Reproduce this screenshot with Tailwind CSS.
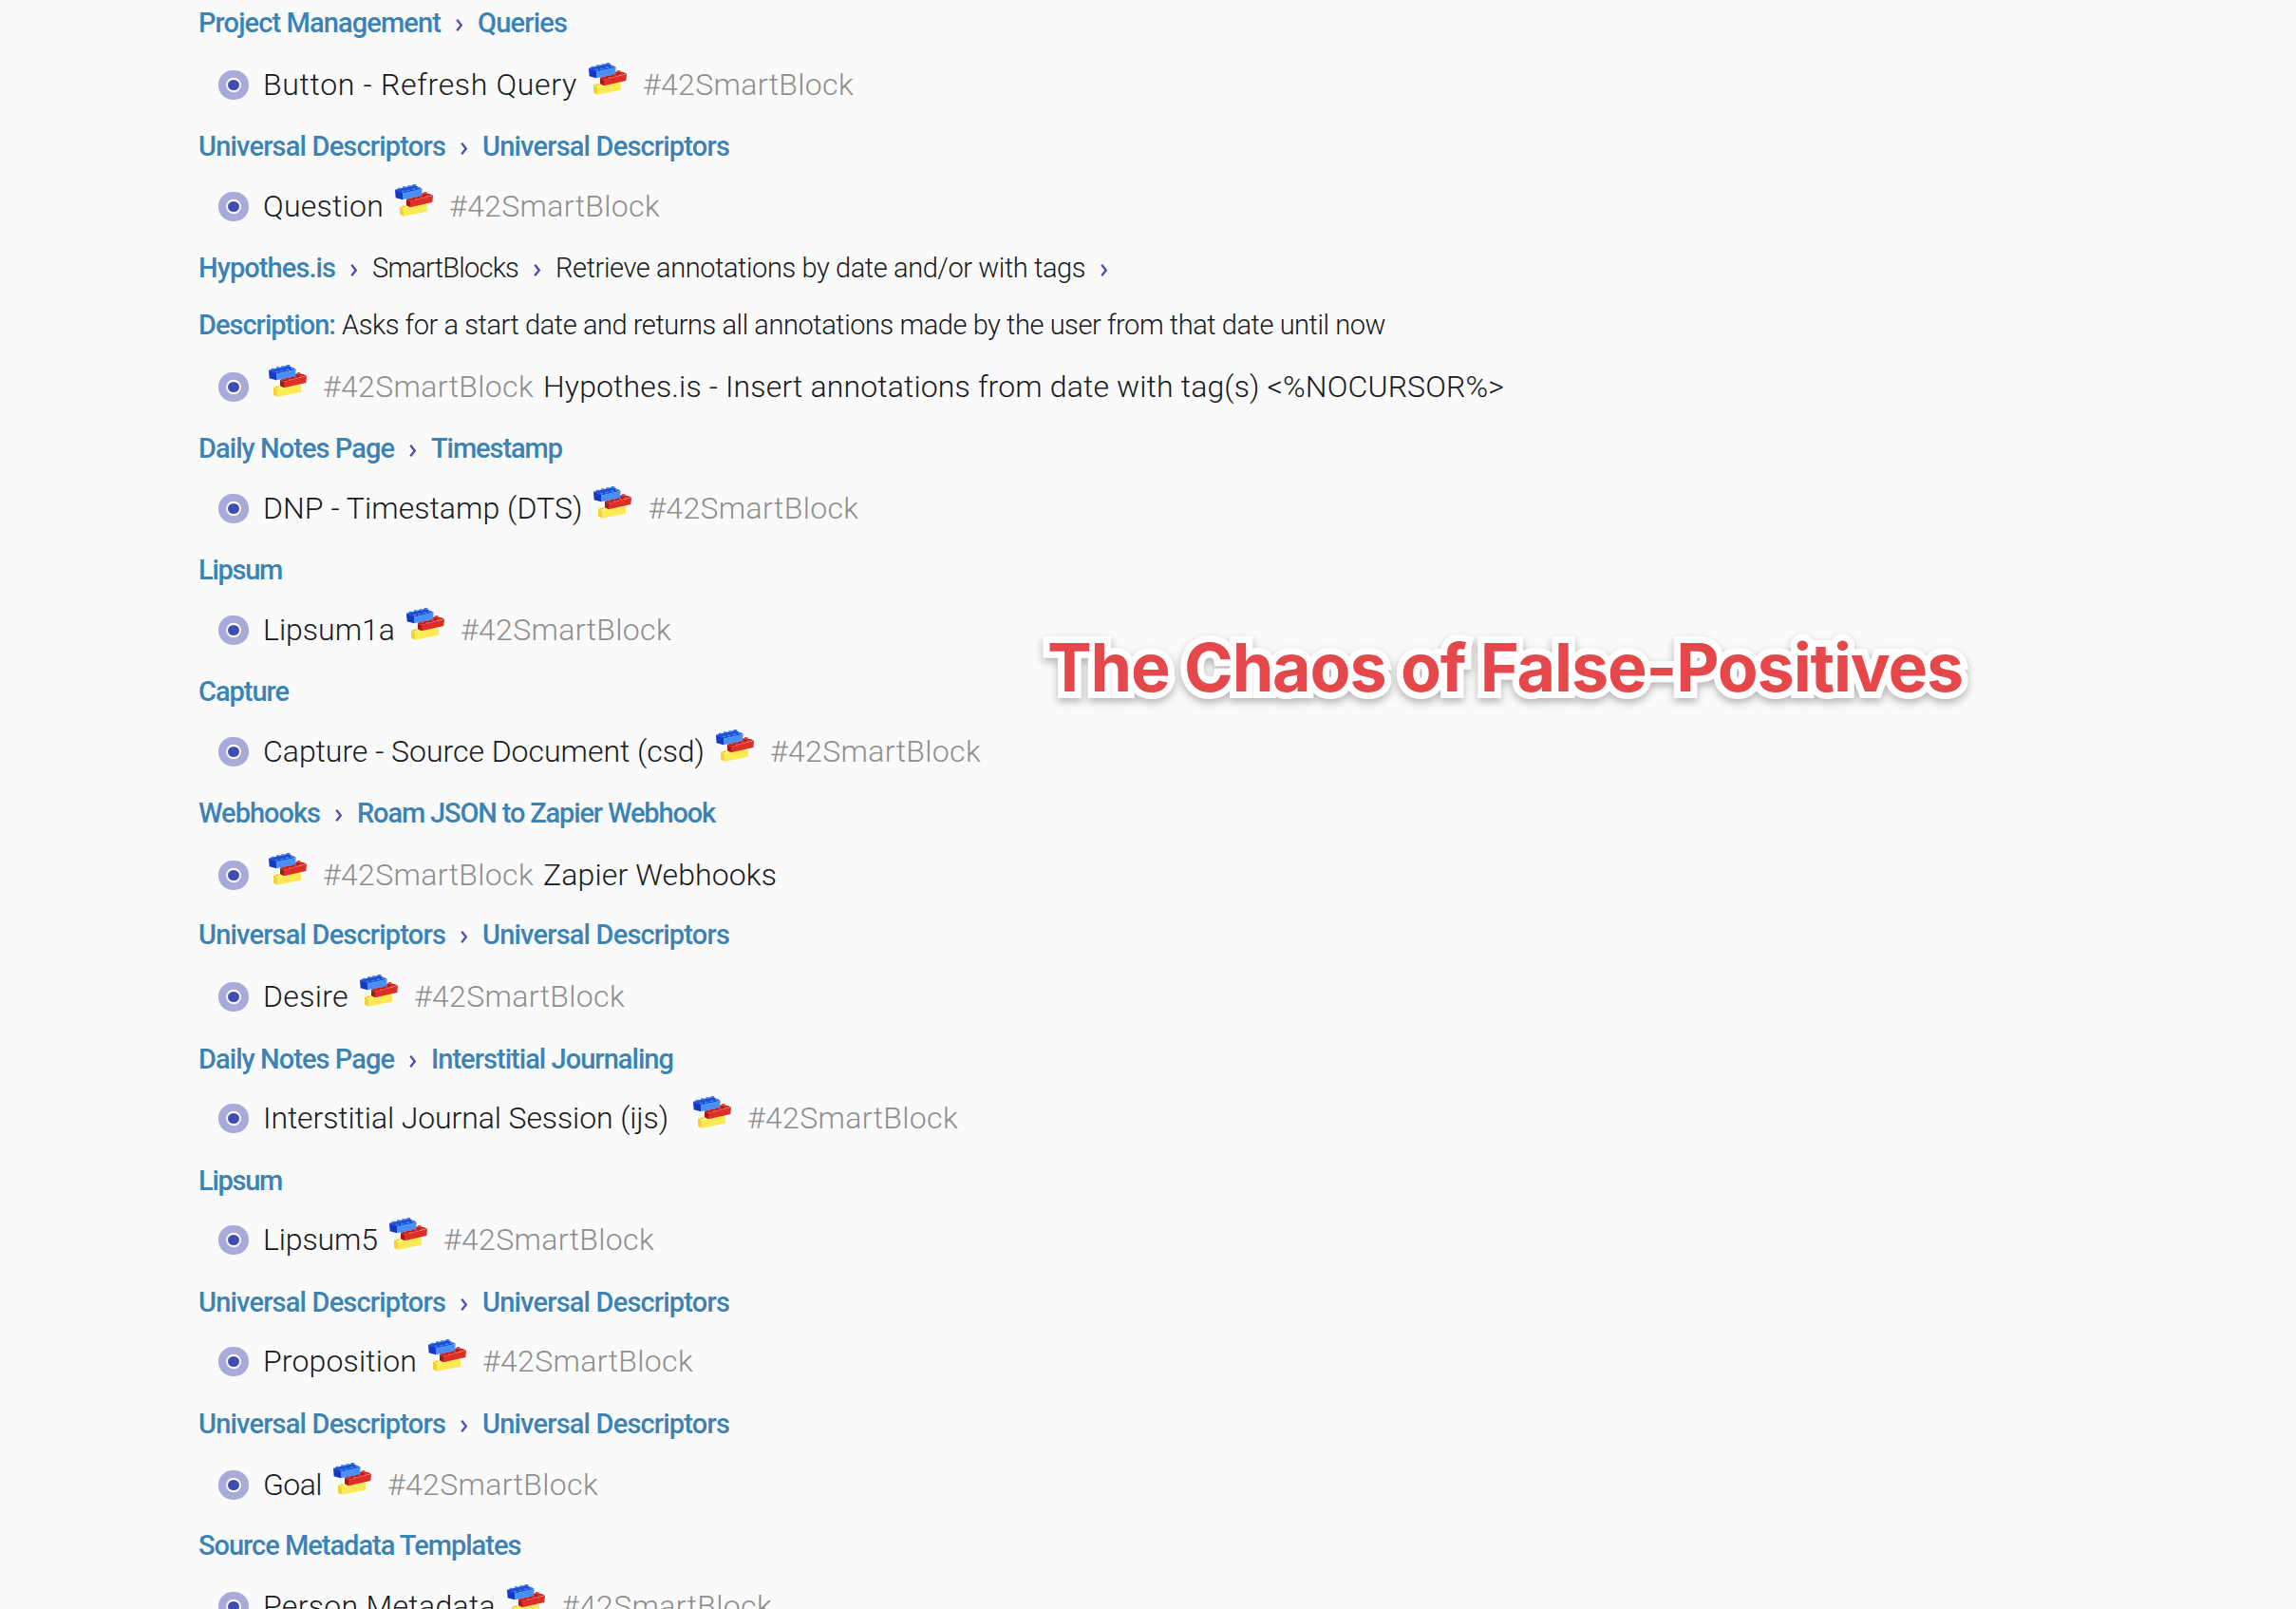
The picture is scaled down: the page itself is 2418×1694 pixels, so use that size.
<!DOCTYPE html>
<html lang="en">
<head>
<meta charset="utf-8">
<title>SmartBlock references</title>
<script src="https://cdn.jsdelivr.net/npm/@tailwindcss/browser@4"></script>
</head>
<body class="bg-[#fafafa] overflow-hidden">
<svg class="hidden">
  <symbol id="bricks" viewBox="0 0 120 105">
    <path fill="#fff176" d="M15 70 62 58 102 64 28 79Z"/>
    <path fill="#f3d235" d="M15 70 28 78V101L15 95Z"/>
    <path fill="#fdea55" d="M28 78 102 62V86L28 101Z"/>
    <path fill="#e9c92f" d="M22 68h9v5h-9zM38 64h9v5h-9z"/>
    <path fill="#b91d1b" d="M36 47 93 26 120 34 48 54Z"/>
    <path fill="#a51a18" d="M36 47 48 54V73L36 67Z"/>
    <path fill="#dd2f26" d="M48 54 120 35 118 57 48 73Z"/>
    <path fill="#ee4a3d" d="M45 42h10v5H45zM61 37h10v5H61zM77 32h10v5H77zM90 24h10v7H90zM62 45h10v4H62zM80 40h10v4H80zM98 34h10v4H98z"/>
    <path fill="#1d4fd0" d="M0 17 62 2 86 15 24 29Z"/>
    <path fill="#1339c4" d="M0 17 24 28V49L2 43Z"/>
    <path fill="#4a8ff5" d="M24 29 86 14 84 37 24 49Z"/>
    <path fill="#3c7ff0" d="M8 11h11v5H8zM24 7h11v5H24zM40 4h11v5H40zM56 0h11v5H56zM20 20h11v5H20zM36 17h11v5H36zM53 13h11v5H53zM69 9h11v5H69z"/>
  </symbol>
</svg>

<main id="list" class="flex flex-col pl-[209px] font-['Roboto','Noto_Sans',sans-serif] whitespace-nowrap"></main>

<h1 class="absolute left-[1103px] top-[661px] font-['Inter',sans-serif] text-[70px] leading-[84px] font-bold whitespace-nowrap text-[#e5484b] [-webkit-text-stroke:14px_white] [paint-order:stroke_fill] [stroke-linejoin:round] drop-shadow-[0_4px_4px_rgba(0,0,0,0.28)]" data-w="964" data-font="700 70px Inter">The Chaos of False-Positives</h1>

<script>
const TAG = '#42SmartBlock';
// Breadcrumb row: [baseline, 'c', [kind, text, width], ...]; block row: [baseline, 'b', ...]
const UD = [['l', 'Universal Descriptors', 260], ['l', 'Universal Descriptors', 260]];
const rows = [
  [34, 'c', ['l', 'Project Management', 255], ['l', 'Queries', 94]],
  [100, 'b', ['t', 'Button - Refresh Query', 331], ['g']],
  [164, 'c', ...UD],
  [228, 'b', ['t', 'Question', 127], ['g']],
  [292, 'c', ['l', 'Hypothes.is', 144], ['p', 'SmartBlocks', 154], ['p', 'Retrieve annotations by date and/or with tags', 558], ['e']],
  [352, 'd', ['l', 'Description:', 144], ['p', 'Asks for a start date and returns all annotations made by the user from that date until now', 1099]],
  [418, 'b', ['g'], ['t', 'Hypothes.is - Insert annotations from date with tag(s) <%NOCURSOR%>', 1012]],
  [482, 'c', ['l', 'Daily Notes Page', 206], ['l', 'Timestamp', 138]],
  [546, 'b', ['t', 'DNP - Timestamp (DTS)', 337], ['g']],
  [610, 'c', ['l', 'Lipsum', 88]],
  [674, 'b', ['t', 'Lipsum1a', 139], ['g']],
  [738, 'c', ['l', 'Capture', 95]],
  [802, 'b', ['t', 'Capture - Source Document (csd)', 465], ['g']],
  [866, 'c', ['l', 'Webhooks', 128], ['l', 'Roam JSON to Zapier Webhook', 377]],
  [932, 'b', ['g'], ['t', 'Zapier Webhooks', 246]],
  [994, 'c', ...UD],
  [1060, 'b', ['t', 'Desire', 90], ['g']],
  [1125, 'c', ['l', 'Daily Notes Page', 206], ['l', 'Interstitial Journaling', 255]],
  [1188, 'b', ['t', 'Interstitial Journal Session (ijs)', 427], ['s'], ['g']],
  [1253, 'c', ['l', 'Lipsum', 88]],
  [1316, 'b', ['t', 'Lipsum5', 121], ['g']],
  [1381, 'c', ...UD],
  [1444, 'b', ['t', 'Proposition', 162], ['g']],
  [1509, 'c', ...UD],
  [1574, 'b', ['t', 'Goal', 62], ['g']],
  [1637, 'c', ['l', 'Source Metadata Templates', 340]],
  [1702, 'b', ['t', 'Person Metadata', 245], ['g']],
];
const esc = s => s.replace(/</g, '&lt;').replace(/>/g, '&gt;');
const chevron = '<svg class="w-[8px] h-[13px] mb-[5px] ml-[16px] mr-[15px] shrink-0 relative -top-[1px]" viewBox="0 0 8 13" fill="none" stroke="#4a4cb8" stroke-width="2.3"><path d="M1.2 .8 5.8 6.5 1.2 12.2"/></svg>';
const bullet = '<svg class="w-[32px] h-[31px] -mb-[4.5px] ml-[21px] mr-[15px] shrink-0 relative top-[4.5px]" viewBox="0 0 32 31"><rect width="32" height="31" rx="15" fill="#a6abd9"/><ellipse cx="16" cy="15.5" rx="8" ry="7.7" fill="#fbfbfb"/><ellipse cx="16" cy="15.5" rx="6" ry="5.5" fill="#3f4cb0"/></svg>';
const draw = ([kind, text, w]) => ({
  l: () => `<span class="font-medium text-[#3b82b5]" data-w="${w}" data-font="500 29px Roboto">${text}</span>`,
  p: () => `<span class="font-light text-[#16191d]" data-w="${w}" data-font="300 29px Roboto">${esc(text)}</span>`,
  t: () => `<span class="font-light text-[#16191d]" data-w="${w}" data-font="300 32px Roboto">${esc(text)}</span>`,
  g: () => `<svg class="w-[40px] h-[35px] ml-[6px] mr-[17px] shrink-0 relative top-[1px]"><use href="#bricks"/></svg><span class="font-light text-[#8e8e8e] mr-[10px]" data-w="222" data-font="300 32px Roboto">${TAG}</span>`,
  s: () => '<span class="w-[14px]"></span>',
  e: () => '',
})[kind]();
document.getElementById('list').innerHTML = rows.map(([y, type, ...items], i) => {
  const top = r => r[0] - (r[1] === 'b' ? 43 : 42);
  const h = i + 1 < rows.length ? top(rows[i + 1]) - top(rows[i]) : 64;
  const shift = i === 0 ? `margin-top:${top(rows[0])}px;` : '';
  let inner = items.map(draw);
  if (type === 'b') {
    inner = bullet + inner.map((s, k) => items[k][0] === 't' && k === 0 ? s + '<span class="w-[6px]"></span>' : s).join('');
  } else inner = type === 'c' ? inner.join(chevron) : inner.join('<span class="w-[7px]"></span>');
  const size = type === 'b' ? 'text-[32px]' : 'text-[29px]';
  return `<div class="flex items-baseline shrink-0 leading-[64px] ${size}" style="${shift}height:${h}px">${inner}</div>`;
}).join('');
const ctx = document.createElement('canvas').getContext('2d');
document.querySelectorAll('[data-w]').forEach(el => {
  ctx.font = el.dataset.font;
  const natural = ctx.measureText(el.textContent).width;
  el.style.letterSpacing = (el.dataset.w - natural) / el.textContent.length + 'px';
});
</script>
</body>
</html>
